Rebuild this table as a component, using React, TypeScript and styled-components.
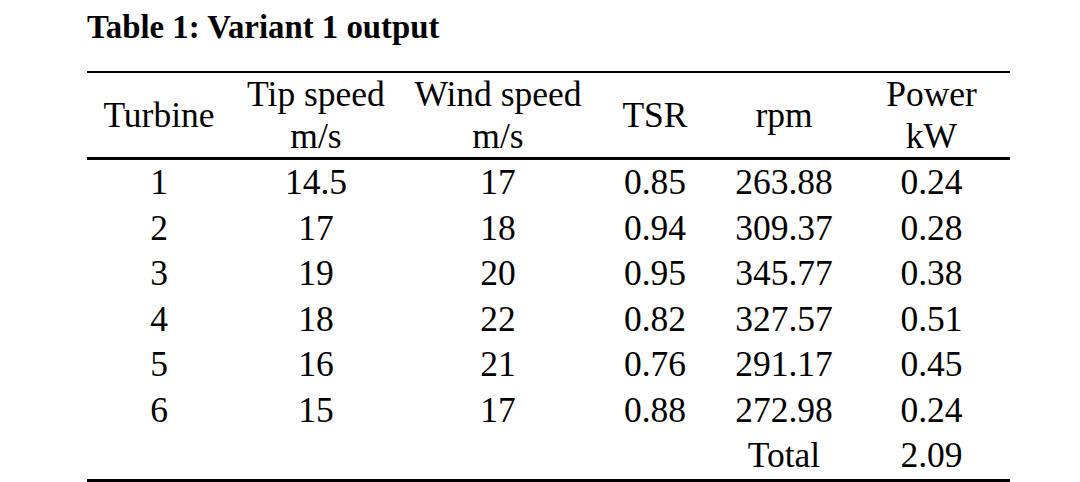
import styled, { createGlobalStyle } from 'styled-components';

const GlobalStyle = createGlobalStyle`
  html, body {
    margin: 0;
    padding: 0;
    background: #fff;
  }
`;

const Page = styled.div`
  font-family: 'Liberation Serif', 'Times New Roman', serif;
  color: #000;
  padding: 7px 0 0 87px;
`;

const Title = styled.div`
  font-size: 32.8px;
  font-weight: 700;
  line-height: 40px;
  margin: 0 0 24px 0;
`;

const Table = styled.table`
  border-collapse: collapse;
  table-layout: fixed;
  width: 923px;
  font-size: 35.5px;
  border-top: 2px solid #000;
  border-bottom: 3px solid #000;
`;

const Head = styled.th`
  font-weight: 400;
  line-height: 42px;
  padding: 0;
  text-align: center;
  vertical-align: middle;
  border-bottom: 3px solid #000;
`;

const Cell = styled.td`
  line-height: 45.5px;
  padding: 0;
  text-align: center;
`;

const columns: { label: string[]; width: number }[] = [
  { label: ['Turbine'], width: 144 },
  { label: ['Tip speed', 'm/s'], width: 170 },
  { label: ['Wind speed', 'm/s'], width: 194 },
  { label: ['TSR'], width: 120 },
  { label: ['rpm'], width: 138 },
  { label: ['Power', 'kW'], width: 157 },
];

const rows = [
  ['1', '14.5', '17', '0.85', '263.88', '0.24'],
  ['2', '17', '18', '0.94', '309.37', '0.28'],
  ['3', '19', '20', '0.95', '345.77', '0.38'],
  ['4', '18', '22', '0.82', '327.57', '0.51'],
  ['5', '16', '21', '0.76', '291.17', '0.45'],
  ['6', '15', '17', '0.88', '272.98', '0.24'],
  ['', '', '', '', 'Total', '2.09'],
];

export default function App() {
  return (
    <Page>
      <GlobalStyle />
      <Title>Table 1: Variant 1 output</Title>
      <Table>
        <colgroup>
          {columns.map((c, i) => (
            <col key={i} style={{ width: c.width }} />
          ))}
        </colgroup>
        <thead>
          <tr>
            {columns.map((c, i) => (
              <Head key={i}>
                {c.label.map((line, j) => (
                  <div key={j}>{line}</div>
                ))}
              </Head>
            ))}
          </tr>
        </thead>
        <tbody>
          {rows.map((r, i) => (
            <tr key={i}>
              {r.map((v, j) => (
                <Cell key={j}>{v}</Cell>
              ))}
            </tr>
          ))}
        </tbody>
      </Table>
    </Page>
  );
}
